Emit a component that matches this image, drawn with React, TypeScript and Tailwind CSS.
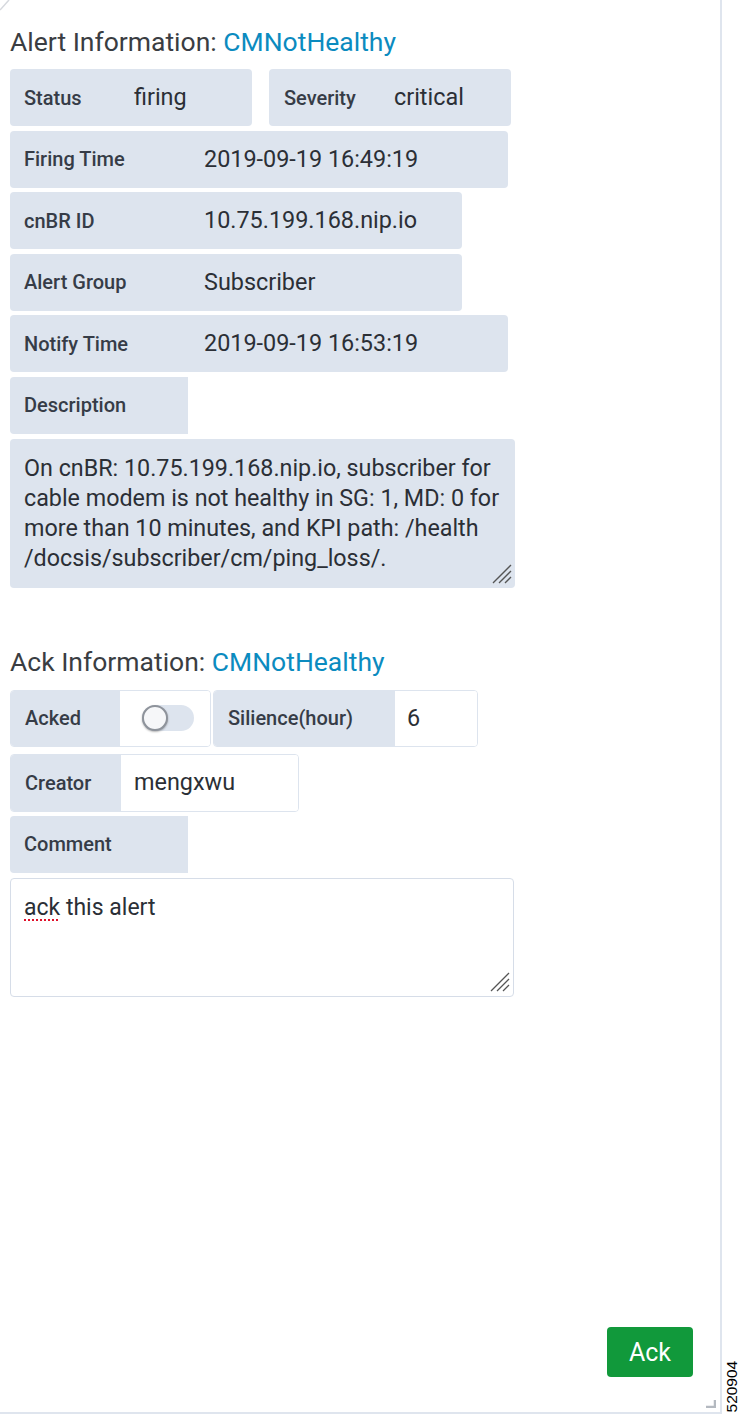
import React from "react";

const LBL = "text-[20px] font-medium text-[#363c47] whitespace-nowrap";
const VAL = "text-[23.4px] text-[#2b2f36] whitespace-nowrap";

function Grip() {
  return (
    <svg width="22" height="22" viewBox="0 0 22 22" className="absolute right-[3px] bottom-[4px]">
      <line x1="21" y1="3" x2="3" y2="21" stroke="#555" strokeWidth="1.3" />
      <line x1="21" y1="9" x2="9" y2="21" stroke="#555" strokeWidth="1.3" />
      <line x1="21" y1="15" x2="15" y2="21" stroke="#555" strokeWidth="1.3" />
    </svg>
  );
}

export default function App() {
  return (
    <div className="relative w-[740px] h-[1417px] bg-white font-['Roboto','Liberation_Sans',sans-serif] overflow-hidden">
      <svg width="12" height="12" className="absolute left-0 top-0">
        <line x1="0" y1="10" x2="9" y2="0" stroke="#d6d9de" strokeWidth="1.5" />
      </svg>
      <div className="relative w-[722px] h-[1414px] border-r-2 border-b-2 border-[#dfe5ee] flex flex-col px-[10px]">
        <h2 className="mt-[27px] h-[30px] leading-[30px] text-[26.5px] text-[#3a3d42] whitespace-nowrap">
          Alert Information: <span className="text-[#0b8bbf]">CMNotHealthy</span>
        </h2>

        <div className="mt-[12px] flex flex-col gap-[4.6px]">
          <div className="flex gap-[17px]">
            <div className="flex items-center h-[57px] w-[242px] rounded bg-[#dde4ee]">
              <span className={`${LBL} w-[124px] pl-[14px]`}>Status</span>
              <span className={VAL}>firing</span>
            </div>
            <div className="flex items-center h-[57px] w-[242px] rounded bg-[#dde4ee]">
              <span className={`${LBL} w-[125px] pl-[15px]`}>Severity</span>
              <span className={VAL}>critical</span>
            </div>
          </div>
          <div className="flex items-center h-[57px] w-[498px] rounded bg-[#dde4ee]">
            <span className={`${LBL} w-[194px] pl-[14px]`}>Firing Time</span>
            <span className={VAL}>2019-09-19 16:49:19</span>
          </div>
          <div className="flex items-center h-[57px] w-[452px] rounded bg-[#dde4ee]">
            <span className={`${LBL} w-[194px] pl-[14px]`}>cnBR ID</span>
            <span className={VAL}>10.75.199.168.nip.io</span>
          </div>
          <div className="flex items-center h-[57px] w-[452px] rounded bg-[#dde4ee]">
            <span className={`${LBL} w-[194px] pl-[14px]`}>Alert Group</span>
            <span className={VAL}>Subscriber</span>
          </div>
          <div className="flex items-center h-[57px] w-[498px] rounded bg-[#dde4ee]">
            <span className={`${LBL} w-[194px] pl-[14px]`}>Notify Time</span>
            <span className={VAL}>2019-09-19 16:53:19</span>
          </div>
          <div className="flex items-center h-[57px] w-[178px] rounded-l bg-[#dde4ee]">
            <span className={`${LBL} pl-[14px]`}>Description</span>
          </div>
          <div className="relative w-[505px] h-[149px] rounded bg-[#dde4ee] pl-[14px] pt-[14px] text-[23.3px] leading-[30.3px] text-[#2b2f36] whitespace-nowrap">
            <div>On cnBR: 10.75.199.168.nip.io, subscriber for</div>
            <div>cable modem is not healthy in SG: 1, MD: 0 for</div>
            <div>more than 10 minutes, and KPI path: /health</div>
            <div>/docsis/subscriber/cm/ping_loss/.</div>
            <Grip />
          </div>
        </div>

        <h2 className="mt-[59px] h-[30px] leading-[30px] text-[26.5px] text-[#3a3d42] whitespace-nowrap">
          Ack Information: <span className="text-[#0b8bbf]">CMNotHealthy</span>
        </h2>

        <div className="mt-[13px] flex flex-col">
          <div className="flex gap-[2px]">
            <div className="flex h-[57px] w-[201px] rounded border border-[#dde4ee] overflow-hidden">
              <div className="flex items-center w-[109px] bg-[#dde4ee] pl-[14px]">
                <span className={`${LBL} text-[#5a606b]`}>Acked</span>
              </div>
              <div className="flex-1 flex items-center pl-[22px] bg-white">
                <div className="relative w-[52px] h-[26px] rounded-full bg-[#dde4ee]">
                  <div className="absolute left-0 top-0 w-[26px] h-[26px] rounded-full bg-[#f6f7f9] border-2 border-[#8e939b] shadow-[0_1px_2px_rgba(0,0,0,0.3)]" />
                </div>
              </div>
            </div>
            <div className="flex h-[57px] w-[265px] rounded border border-[#dde4ee] overflow-hidden">
              <div className="flex items-center w-[181px] bg-[#dde4ee] pl-[14px]">
                <span className={LBL}>Silience(hour)</span>
              </div>
              <div className="flex-1 flex items-center pl-[12px] bg-white">
                <span className={VAL}>6</span>
              </div>
            </div>
          </div>
          <div className="mt-[7px] flex h-[58px] w-[289px] rounded border border-[#dde4ee] overflow-hidden">
            <div className="flex items-center w-[110px] bg-[#dde4ee] pl-[14px]">
              <span className={LBL}>Creator</span>
            </div>
            <div className="flex-1 flex items-center pl-[13px] bg-white">
              <span className={VAL}>mengxwu</span>
            </div>
          </div>
          <div className="mt-[4px] flex items-center h-[57px] w-[178px] rounded-l bg-[#dde4ee]">
            <span className={`${LBL} pl-[14px]`}>Comment</span>
          </div>
          <div className="relative mt-[5px] w-[504px] h-[119px] rounded border-[1.5px] border-[#d6dde8] bg-white pl-[13px] pt-[14px] text-[23px] leading-[30px] text-[#2b2f36]">
            <span className="underline decoration-dotted decoration-[#e0102a] decoration-2 underline-offset-[5px]">ack</span> this alert
            <Grip />
          </div>
        </div>

        <div className="mt-auto flex justify-end pr-[17px] pb-[35px]">
          <button className="w-[86px] h-[50px] rounded bg-[#11993b] text-white text-[25px] leading-none">
            Ack
          </button>
        </div>

        <svg width="10" height="8" className="absolute right-[4px] bottom-[4px]">
          <path d="M9 0 V7 H0" fill="none" stroke="#b4b9c0" strokeWidth="2.5" />
        </svg>
      </div>

      <div className="absolute left-[724px] top-[1362px] w-[16px] h-[50px] flex items-center justify-center">
        <span className="-rotate-90 whitespace-nowrap text-[15.5px] text-black font-['Liberation_Sans',sans-serif]">520904</span>
      </div>
    </div>
  );
}
